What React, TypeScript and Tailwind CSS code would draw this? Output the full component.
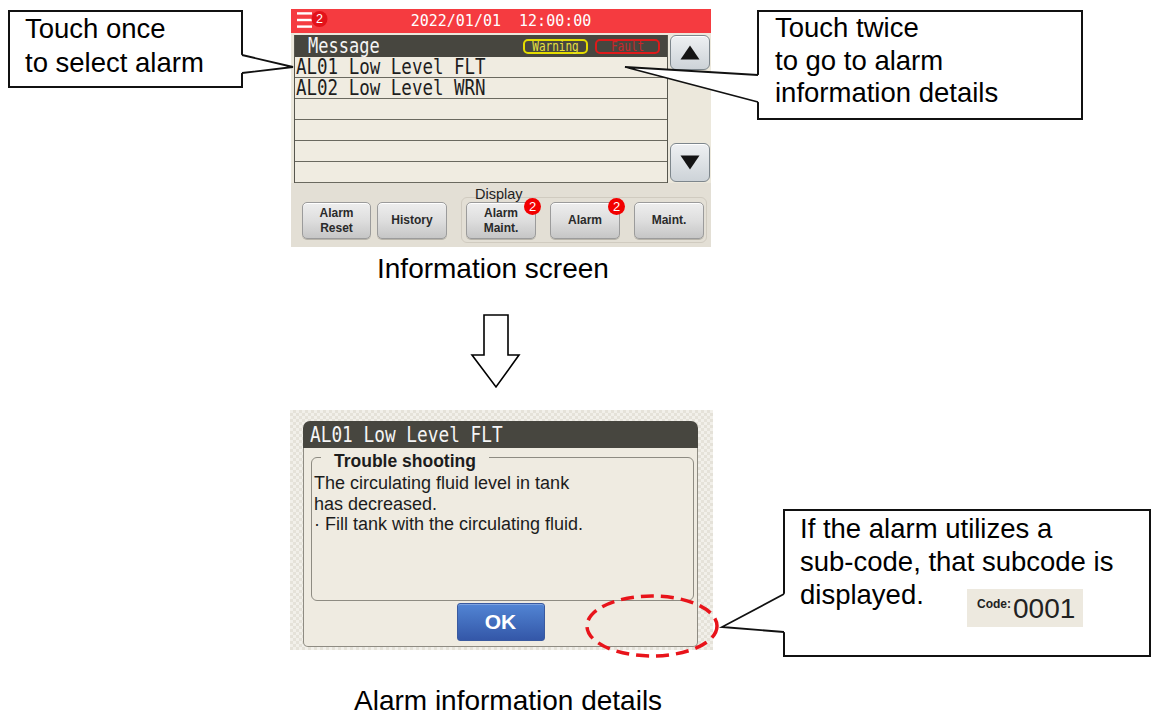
import React from "react";

const hmi = "font-['DejaVu_Sans_Mono','Liberation_Mono',monospace]";

function Tri({ up }: { up?: boolean }) {
  return (
    <svg width="20" height="15" viewBox="0 0 20 15">
      {up ? (
        <polygon points="10,0.5 19.5,14.5 0.5,14.5" fill="#141414" />
      ) : (
        <polygon points="0.5,0.5 19.5,0.5 10,14.5" fill="#141414" />
      )}
    </svg>
  );
}

function ScrollBtn({ up, h }: { up?: boolean; h: string }) {
  return (
    <div
      className={`${h} w-[40px] rounded-[6px] border border-[#7d868c] bg-linear-to-b from-[#eef0f2] to-[#cdd3d8] shadow-[inset_0_1px_0_#ffffff] flex items-center justify-center`}
    >
      <Tri up={up} />
    </div>
  );
}

function HmiBtn({
  children,
  badge,
  w = "w-[70px]",
}: {
  children: React.ReactNode;
  badge?: string;
  w?: string;
}) {
  return (
    <div
      className={`relative ${w} h-[37px] shrink-0 rounded-[5px] border border-[#9b9b9b] bg-linear-to-b from-[#eeeeee] via-[#dedede] to-[#c6c6c6] shadow-[inset_0_1px_0_#ffffff,0_1px_0_#b8b4aa] flex items-center justify-center text-center font-['Liberation_Sans',Arial,sans-serif] text-[12px] leading-[15px] font-bold text-[#2a2a2a]`}
    >
      <div>{children}</div>
      {badge && (
        <span className="absolute left-[57px] -top-[5px] w-[17px] h-[17px] rounded-full bg-[#f20000] text-white text-[13px] leading-[17px] font-normal text-center">
          {badge}
        </span>
      )}
    </div>
  );
}

function Row({ text }: { text?: string }) {
  return (
    <div className="h-[21px] border-b border-[#6a695f] bg-[#f0ece1] flex items-center pl-[1px]">
      {text && (
        <span
          className={`${hmi} inline-block text-[17.5px] leading-[16px] text-[#1e1e1e] scale-y-[1.22] whitespace-pre`}
        >
          {text}
        </span>
      )}
    </div>
  );
}

function TopScreen() {
  return (
    <div className="ml-[291px] w-[420px] h-[238px] bg-[#ece8dc] flex flex-col">
      {/* header */}
      <div className="relative h-[24px] bg-[#f53b40] flex items-center justify-center">
        <svg className="absolute left-0 top-0" width="40" height="24" viewBox="0 0 40 24">
          <rect x="6" y="3.2" width="15" height="2.4" fill="#ffffff" />
          <rect x="6" y="9.8" width="15" height="2.4" fill="#ffffff" />
          <rect x="6" y="16.4" width="15" height="2.4" fill="#ffffff" />
          <circle cx="28.5" cy="10" r="8" fill="#e3121a" />
          <text
            x="28.5"
            y="14.4"
            textAnchor="middle"
            fontSize="12.5"
            fill="#ffffff"
            fontFamily="Liberation Sans, Arial, sans-serif"
          >
            2
          </text>
        </svg>
        <span className={`${hmi} text-white text-[15px] leading-[18px] whitespace-pre`}>
          2022/01/01  12:00:00
        </span>
      </div>

      {/* main */}
      <div className="h-[150px] flex">
        <div className="ml-[3px] mt-[2px] w-[374px] border-x border-[#57564e] flex flex-col">
          <div className="h-[22px] bg-[#47463f] flex items-center pl-[13px] pr-[7px]">
            <span
              className={`${hmi} inline-block text-[17px] leading-[16px] text-[#f5f5f5] scale-y-[1.2]`}
            >
              Message
            </span>
            <div className="ml-auto flex gap-[7px]">
              <div className="w-[65px] h-[15px] rounded-[5px] border-2 border-[#e4dc00] flex items-center justify-center">
                <span
                  className={`${hmi} inline-block text-[11px] leading-[9px] text-[#e6e040] scale-y-[1.25]`}
                >
                  Warning
                </span>
              </div>
              <div className="w-[65px] h-[15px] rounded-[5px] border-2 border-[#df1a1a] flex items-center justify-center">
                <span
                  className={`${hmi} inline-block text-[11px] leading-[9px] text-[#c9272a] scale-y-[1.25]`}
                >
                  Fault
                </span>
              </div>
            </div>
          </div>
          <Row text="AL01 Low Level FLT" />
          <Row text="AL02 Low Level WRN" />
          <Row />
          <Row />
          <Row />
          <Row />
        </div>
        <div className="flex-1 flex flex-col justify-between pl-[2px] pt-[2px] pb-[1px]">
          <ScrollBtn up h="h-[35px]" />
          <ScrollBtn h="h-[39px]" />
        </div>
      </div>

      {/* bottom bar */}
      <div className="h-[64px] bg-[#e3dfd5] flex items-start pl-[11px]">
        <div className="mt-[19px]">
          <HmiBtn w="w-[69px]">
            Alarm
            <br />
            Reset
          </HmiBtn>
        </div>
        <div className="mt-[19px] ml-[6px]">
          <HmiBtn>History</HmiBtn>
        </div>
        <div className="relative mt-[14px] ml-[14px] w-[246px] h-[46px] rounded-[6px] border border-[#d0cbc0] pl-[4px] pt-[4px] flex gap-[14px]">
          <span className="absolute left-[13px] -top-[12px] font-['Liberation_Sans',Arial,sans-serif] text-[14.5px] leading-[16px] text-[#222]">
            Display
          </span>
          <HmiBtn badge="2">
            Alarm
            <br />
            Maint.
          </HmiBtn>
          <HmiBtn badge="2">Alarm</HmiBtn>
          <HmiBtn>Maint.</HmiBtn>
        </div>
      </div>
    </div>
  );
}

function DownArrow() {
  return (
    <svg className="ml-[470px] mt-[28px]" width="52" height="76" viewBox="0 0 52 76">
      <path
        d="M14 2 H38 V42 H49 L26 74 L2 42 H14 Z"
        fill="#ffffff"
        stroke="#000000"
        strokeWidth="1.6"
        strokeLinejoin="miter"
      />
    </svg>
  );
}

function Dialog() {
  return (
    <div className="mt-[21px] ml-[290px] w-[423px] h-[240px] bg-[repeating-conic-gradient(#e5e2d9_0%_25%,#f2f0ea_0%_50%)] bg-[length:6px_6px] pt-[11px] pl-[13px]">
      <div className="w-[395px]">
        <div className="h-[27px] bg-[#47463f] rounded-t-[7px] flex items-center pl-[7px]">
          <span
            className={`${hmi} inline-block text-[17.8px] leading-[17px] text-[#f5f5f5] scale-y-[1.23] whitespace-pre`}
          >
            AL01 Low Level FLT
          </span>
        </div>
        <div className="h-[199px] bg-[#efebe1] border-x border-b border-[#8e8b82] rounded-b-[5px] pt-[9px]">
          <div className="relative ml-[7px] w-[383px] h-[144px] border border-[#8e8b82] rounded-[6px] pt-[15px] pl-[2px] font-['Liberation_Sans',Arial,sans-serif] text-[18px] leading-[20.5px] text-[#1c1c1c]">
            <span className="absolute left-[9px] -top-[7px] px-[13px] bg-[#efebe1] font-bold text-[17.5px] leading-[20px] text-[#1c1c1c]">
              Trouble shooting
            </span>
            <div>The circulating fluid level in tank</div>
            <div>has decreased.</div>
            <div>· Fill tank with the circulating fluid.</div>
          </div>
          <div className="mt-[2px] flex justify-center">
            <div className="w-[88px] h-[38px] rounded-[3px] border border-[#3a5a9f] bg-linear-to-b from-[#5285d4] to-[#3457a8] shadow-[inset_0_1px_0_#7ea3e0] flex items-center justify-center font-['Liberation_Sans',Arial,sans-serif] font-bold text-[21px] text-white">
              OK
            </div>
          </div>
        </div>
      </div>
    </div>
  );
}

export default function App() {
  return (
    <div className="relative w-[1152px] h-[715px] bg-white overflow-hidden font-['Liberation_Sans',Arial,sans-serif] text-black">
      <div className="flex flex-col items-start pt-[9px]">
        <TopScreen />
        <div className="mt-[6px] ml-[377px] text-[28px] leading-[32px] whitespace-nowrap">
          Information screen
        </div>
        <DownArrow />
        <Dialog />
        <div className="mt-[37px] ml-[354px] text-[28px] leading-[28px] whitespace-nowrap">
          Alarm information details
        </div>
      </div>

      {/* Callout 1 */}
      <div className="absolute left-[8px] top-[10px] w-[235px] h-[78px] border-2 border-[#111] bg-white pl-[15px] text-[27.5px] leading-[34px] whitespace-nowrap">
        <div>Touch once</div>
        <div>to select alarm</div>
      </div>

      {/* Callout 2 */}
      <div className="absolute left-[757px] top-[10px] w-[326px] h-[110px] border-2 border-[#111] bg-white pl-[16px] text-[27.5px] leading-[32.5px] whitespace-nowrap">
        <div>Touch twice</div>
        <div>to go to alarm</div>
        <div>information details</div>
      </div>

      {/* Callout 3 */}
      <div className="absolute left-[783px] top-[509px] w-[368px] h-[148px] border-2 border-[#111] bg-white pt-[1px] pl-[15px] text-[27.5px] leading-[33px] whitespace-nowrap">
        <div>If the alarm utilizes a</div>
        <div>sub-code, that subcode is</div>
        <div>displayed.</div>
        <div className="absolute left-[182px] top-[78px] w-[116px] h-[38px] bg-[#ede9df] flex items-start pt-[6px] pl-[10px] gap-[2px]">
          <span className="mt-[2px] text-[12px] leading-[14px] font-bold text-[#222]">Code:</span>
          <span className="text-[28px] leading-[28px] text-[#222]">0001</span>
        </div>
      </div>

      {/* tails and highlight ellipse */}
      <svg
        className="absolute left-0 top-0 pointer-events-none"
        width="1152"
        height="715"
        viewBox="0 0 1152 715"
      >
        <path d="M240 54.5 L293 67 L240 73.2 Z" fill="#ffffff" />
        <path d="M242 55 L293 67 L242 73" fill="none" stroke="#111" strokeWidth="1.8" />

        <path d="M760 75.1 L625 67 L760 102.5 Z" fill="#ffffff" />
        <path d="M758 75 L625 67 L758 102" fill="none" stroke="#111" strokeWidth="1.8" />

        <path d="M786 592.9 L722 627 L786 632.2 Z" fill="#ffffff" />
        <path d="M784 594 L722 627 L784 632" fill="none" stroke="#111" strokeWidth="1.8" />

        <ellipse
          cx="652"
          cy="626"
          rx="65"
          ry="30"
          fill="none"
          stroke="#e8141b"
          strokeWidth="3.5"
          strokeDasharray="13 7"
        />
      </svg>
    </div>
  );
}
